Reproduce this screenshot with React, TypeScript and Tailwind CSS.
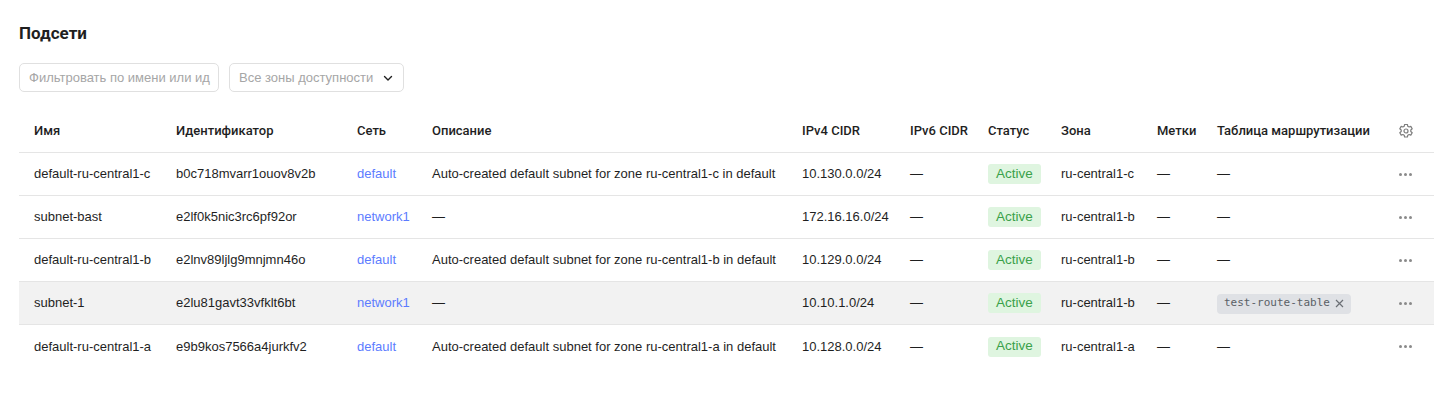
import React from 'react';

type Row = {
  name: string;
  id: string;
  network: string;
  description: string;
  ipv4: string;
  zone: string;
  routeTable?: string;
  hovered?: boolean;
};

const rows: Row[] = [
  {
    name: 'default-ru-central1-c',
    id: 'b0c718mvarr1ouov8v2b',
    network: 'default',
    description: 'Auto-created default subnet for zone ru-central1-c in default',
    ipv4: '10.130.0.0/24',
    zone: 'ru-central1-c',
  },
  {
    name: 'subnet-bast',
    id: 'e2lf0k5nic3rc6pf92or',
    network: 'network1',
    description: '—',
    ipv4: '172.16.16.0/24',
    zone: 'ru-central1-b',
  },
  {
    name: 'default-ru-central1-b',
    id: 'e2lnv89ljlg9mnjmn46o',
    network: 'default',
    description: 'Auto-created default subnet for zone ru-central1-b in default',
    ipv4: '10.129.0.0/24',
    zone: 'ru-central1-b',
  },
  {
    name: 'subnet-1',
    id: 'e2lu81gavt33vfklt6bt',
    network: 'network1',
    description: '—',
    ipv4: '10.10.1.0/24',
    zone: 'ru-central1-b',
    routeTable: 'test-route-table',
    hovered: true,
  },
  {
    name: 'default-ru-central1-a',
    id: 'e9b9kos7566a4jurkfv2',
    network: 'default',
    description: 'Auto-created default subnet for zone ru-central1-a in default',
    ipv4: '10.128.0.0/24',
    zone: 'ru-central1-a',
  },
];

const cols = 'grid grid-cols-[142px_181px_75px_370px_108px_78px_73px_96px_60px_188px_44px]';

const GearIcon = () => (
  <svg width="16" height="16" viewBox="0 0 16 16" fill="none" stroke="#7d7d7d" strokeWidth="1.2">
    <path d="M6.6 1.5h2.8l.4 1.8 1.3.7 1.7-.6 1.4 2.4-1.4 1.2v1.5l1.4 1.2-1.4 2.4-1.7-.6-1.3.7-.4 1.8H6.6l-.4-1.8-1.3-.7-1.7.6-1.4-2.4 1.4-1.2V7l-1.4-1.2 1.4-2.4 1.7.6 1.3-.7z" strokeLinejoin="round" />
    <circle cx="8" cy="8" r="2" />
  </svg>
);

const Dots = () => (
  <div className="flex gap-[2px]">
    <span className="w-[3px] h-[3px] rounded-full bg-[#8a8a8a]" />
    <span className="w-[3px] h-[3px] rounded-full bg-[#8a8a8a]" />
    <span className="w-[3px] h-[3px] rounded-full bg-[#8a8a8a]" />
  </div>
);

export default function App() {
  return (
    <div className="min-h-screen bg-white px-[19px] pt-[21px] text-[13px] text-[#1f1f1f] font-['Liberation_Sans',sans-serif]">
      <h1 className="text-[17px] font-bold leading-[24px] font-['Roboto',sans-serif]">Подсети</h1>

      <div className="flex gap-[10px] mt-[18px]">
        <div className="w-[200px] h-[29px] border border-[#e0e0e0] rounded-[5px] flex items-center px-[9px] text-[#a6a6a6] whitespace-nowrap overflow-hidden">
          Фильтровать по имени или ид
        </div>
        <div className="w-[175px] h-[29px] border border-[#e0e0e0] rounded-[5px] flex items-center justify-between px-[9px] text-[#a6a6a6]">
          <span>Все зоны доступности</span>
          <svg width="12" height="12" viewBox="0 0 12 12" fill="none" stroke="#1f1f1f" strokeWidth="1.4">
            <path d="M2.5 4.5 6 8l3.5-3.5" strokeLinecap="round" strokeLinejoin="round" />
          </svg>
        </div>
      </div>

      <div className="mt-[18px] w-[1415px]">
        <div className={`${cols} h-[43px] items-center font-medium font-['Roboto',sans-serif] text-[#1f1f1f] border-b border-[#e5e5e5]`}>
          <div className="pl-[15px]">Имя</div>
          <div className="pl-[15px]">Идентификатор</div>
          <div className="pl-[15px]">Сеть</div>
          <div className="pl-[15px]">Описание</div>
          <div className="pl-[15px]">IPv4 CIDR</div>
          <div className="pl-[15px]">IPv6 CIDR</div>
          <div className="pl-[15px]">Статус</div>
          <div className="pl-[15px]">Зона</div>
          <div className="pl-[15px]">Метки</div>
          <div className="pl-[15px] whitespace-nowrap">Таблица маршрутизации</div>
          <div className="pl-[8px] flex items-center">
            <GearIcon />
          </div>
        </div>

        {rows.map((r, i) => (
          <div
            key={r.id}
            className={`${cols} h-[43px] items-center whitespace-nowrap ${
              i < rows.length - 1 ? 'border-b border-[#e5e5e5]' : ''
            } ${r.hovered ? 'bg-[#f2f2f2]' : ''}`}
          >
            <div className="pl-[15px]">{r.name}</div>
            <div className="pl-[15px]">{r.id}</div>
            <div className="pl-[15px] text-[#5c7cff]">{r.network}</div>
            <div className="pl-[15px]">{r.description}</div>
            <div className="pl-[15px]">{r.ipv4}</div>
            <div className="pl-[15px]">—</div>
            <div className="pl-[15px]">
              <span className="inline-flex items-center h-[20px] px-[8px] rounded-[3px] bg-[#dff5e0] text-[#3aa14a] text-[13.5px]">
                Active
              </span>
            </div>
            <div className="pl-[15px]">{r.zone}</div>
            <div className="pl-[15px]">—</div>
            <div className="pl-[15px]">
              {r.routeTable ? (
                <span className="inline-flex items-center gap-[5px] h-[20px] px-[7px] rounded-[4px] bg-[#dfe1e5] text-[#5a5f66] font-['DejaVu_Sans_Mono',monospace] text-[11px]">
                  {r.routeTable}
                  <svg width="9" height="9" viewBox="0 0 9 9" stroke="#6b6f75" strokeWidth="1.2">
                    <path d="M1 1l7 7M8 1 1 8" />
                  </svg>
                </span>
              ) : (
                '—'
              )}
            </div>
            <div className="pl-[9px] flex items-center">
              <Dots />
            </div>
          </div>
        ))}
      </div>
    </div>
  );
}
